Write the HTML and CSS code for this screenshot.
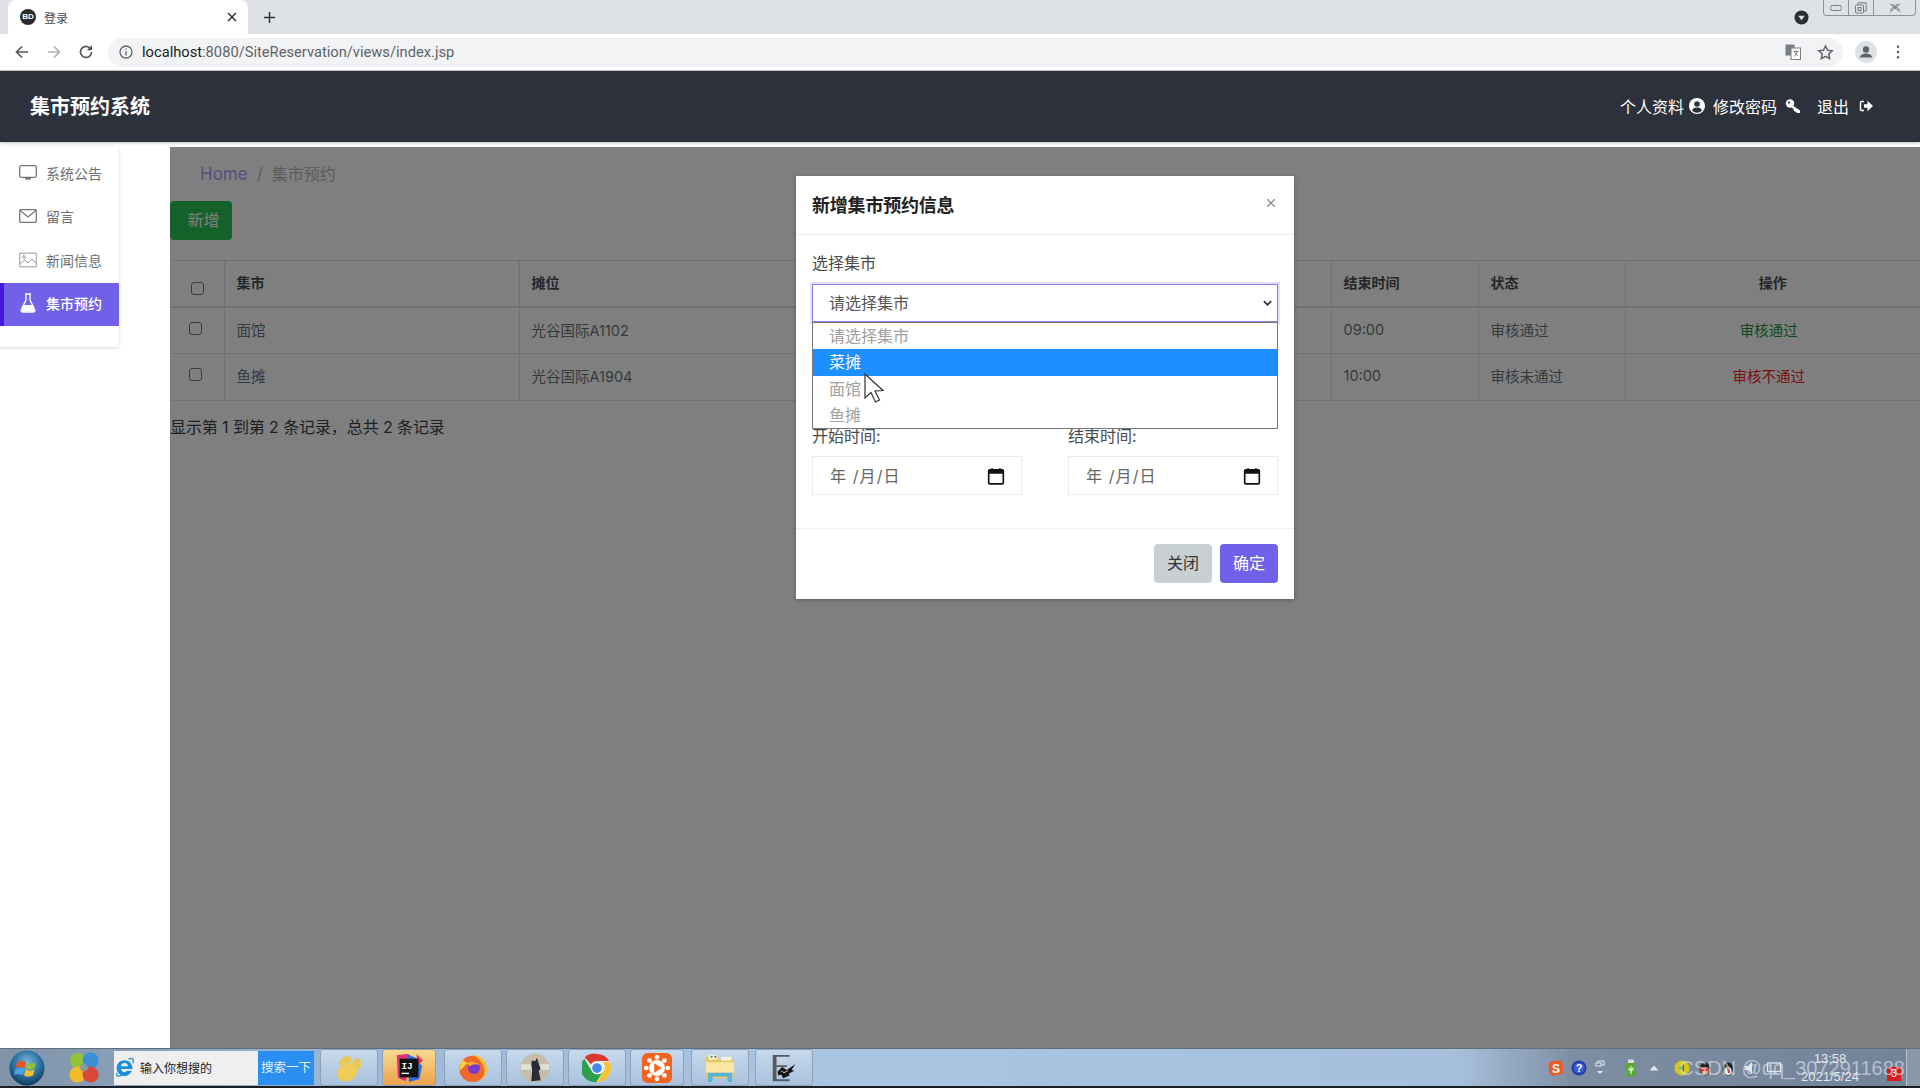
FILE: index.html
```html
<!DOCTYPE html>
<html lang="zh-CN">
<head>
<meta charset="utf-8">
<title>登录</title>
<link rel="stylesheet" href="styles.css">
</head>
<body>
<div class="tabstrip">
  <div class="tab">
    <span class="favicon">BD</span>
    <span class="tab-title">登录</span>
    <svg class="tab-close" viewBox="0 0 10 10"><path d="M1 1l8 8M9 1l-8 8"/></svg>
  </div>
  <svg class="tab-new" viewBox="0 0 14 14"><path d="M7 1v12M1 7h12"/></svg>
  <svg class="profile-drop" viewBox="0 0 16 16"><circle cx="8" cy="8" r="7.5" fill="#2b2d30"/><path d="M4.5 6h7L8 11z" fill="#dee1e6"/></svg>
  <div class="winbtns">
    <span class="winbtn win-min"><svg viewBox="0 0 12 6"><rect x="0.5" y="0.5" width="11" height="5" rx="2"/></svg></span>
    <span class="winbtn win-max"><svg viewBox="0 0 12 12"><rect x="0.5" y="3" width="8" height="8" rx="1"/><path d="M3 3V0.8h8.2V9H8.5"/><rect x="3" y="5.5" width="3" height="3"/></svg></span>
    <span class="winbtn win-close"><svg viewBox="0 0 14 10"><path d="M2 1l10 8M12 1L2 9M4 1l8 6M10 1L2 7"/></svg></span>
  </div>
</div>
<div class="toolbar">
  <svg class="nav-ico" viewBox="0 0 16 16"><path d="M14 8H3M8 2.5L2.5 8 8 13.5"/></svg>
  <svg class="nav-ico nav-off" viewBox="0 0 16 16"><path d="M2 8h11M8 2.5L13.5 8 8 13.5"/></svg>
  <svg class="nav-ico" viewBox="0 0 16 16"><path d="M13.5 8A5.5 5.5 0 1 1 11.6 3.8"/><path class="solid" d="M14 1v5.2H8.8z"/></svg>
  <div class="omnibox">
    <svg class="info-ico" viewBox="0 0 14 14"><circle cx="7" cy="7" r="6"/><path d="M7 6.2V10.5M7 3.4v1.4"/></svg>
    <span class="url"><span class="url-host">localhost</span>:8080/SiteReservation/views/index.jsp</span>
    <svg class="translate-ico" viewBox="0 0 16 16"><rect x="0.5" y="0.5" width="9" height="11" fill="#7b7f84"/><rect x="6" y="4" width="9.5" height="11.5" fill="#fff" stroke="#7b7f84"/><path d="M8.5 7.5h5M11 6.5v1M9.5 12.5l3-5M9.5 8.5l3.5 3.5" fill="none" stroke="#7b7f84"/></svg>
    <svg class="star-ico" viewBox="0 0 16 16"><path d="M8 1.8l1.9 4.1 4.4.5-3.3 3 .9 4.4L8 11.6l-3.9 2.2.9-4.4-3.3-3 4.4-.5z"/></svg>
  </div>
  <svg class="avatar-ico" viewBox="0 0 22 22"><circle cx="11" cy="11" r="11" fill="#dee1e6"/><circle cx="11" cy="8.5" r="3.2" fill="#5f6368"/><path d="M4.8 16.5c.6-3 3.4-4 6.2-4s5.6 1 6.2 4z" fill="#5f6368"/></svg>
  <svg class="dots-ico" viewBox="0 0 4 16"><circle cx="2" cy="2" r="1.5"/><circle cx="2" cy="8" r="1.5"/><circle cx="2" cy="14" r="1.5"/></svg>
</div>

<header class="appbar">
  <h1 class="brand">集市预约系统</h1>
  <nav class="usernav">
    <span class="usernav-item">个人资料
      <svg class="usernav-ico" viewBox="0 0 16 16"><circle cx="8" cy="8" r="8" fill="#fff"/><circle cx="8" cy="6" r="2.8" fill="#2d313c"/><path d="M3 12.500c1-2.500 3-3 5-3s4 .5 5 3a6.500 6.500 0 0 1-10 0z" fill="#2d313c"/></svg>
    </span>
    <span class="usernav-item">修改密码
      <svg class="usernav-ico key-ico" viewBox="0 0 16 16"><circle cx="5" cy="5.500" r="4.200" fill="#fff"/><circle cx="4" cy="4.500" r="1.100" fill="#2d313c"/><path d="M7 7l8 5.500v2.500h-3L10.500 13.500 9 13.300l-.2-1.500L6 8.500z" fill="#fff"/></svg>
    </span>
    <span class="usernav-item usernav-exit">退出
      <svg class="usernav-ico" viewBox="0 0 16 16"><path d="M6 3.500H3.500A1 1 0 0 0 2.500 4.500v7a1 1 0 0 0 1 1H6" fill="none" stroke="#fff" stroke-width="1.500"/><path d="M6 6.200h3.500V2.800L15 8l-5.500 5.200V9.800H6z" fill="#fff"/></svg>
    </span>
  </nav>
</header>

<div class="workspace">
  <aside class="sidecol">
    <ul class="sidemenu">
      <li class="sideitem">
        <svg class="side-ico" viewBox="0 0 18 16"><rect x="0.7" y="0.7" width="16.6" height="11.6" rx="1.5"/><path class="solid" d="M6 12.500h6v2H6z"/></svg>
        系统公告
      </li>
      <li class="sideitem">
        <svg class="side-ico" viewBox="0 0 18 16"><rect x="0.7" y="1.7" width="16.6" height="12.6" rx="0.8"/><path d="M1 2.500l8 6.500 8-6.500"/></svg>
        留言
      </li>
      <li class="sideitem">
        <svg class="side-ico side-ico-light" viewBox="0 0 18 16"><rect x="0.7" y="1.2" width="16.6" height="13.6"/><circle cx="5" cy="5" r="1.3"/><path d="M1 12l4.500-4 3.500 3 4-4 4.500 4.500"/></svg>
        新闻信息
      </li>
      <li class="sideitem is-active">
        <svg class="side-ico" viewBox="0 0 18 20"><path d="M6 1h6M7 1v6L2.200 16.800A1.500 1.500 0 0 0 3.500 19h11a1.500 1.500 0 0 0 1.300-2.200L11 7V1"/><path class="solid" d="M4.800 12h8.400l2.300 5.400a.8.8 0 0 1-.8 1H3.300a.8.8 0 0 1-.8-1z"/></svg>
        集市预约
      </li>
    </ul>
  </aside>

  <main class="content">
    <div class="breadcrumb">
      <span class="crumb-link">Home</span>
      <span class="crumb-sep">/</span>
      <span class="crumb-current">集市预约</span>
    </div>
    <button class="btn-add" type="button">新增</button>
    <table class="grid">
      <colgroup>
        <col class="c-check"><col class="c-wide"><col class="c-wide"><col class="c-mid"><col class="c-mid"><col class="c-narrow"><col class="c-narrow"><col>
      </colgroup>
      <thead>
        <tr>
          <th><span class="checkbox head-check"></span></th>
          <th>集市</th><th>摊位</th><th></th><th></th><th>结束时间</th><th>状态</th><th class="center">操作</th>
        </tr>
      </thead>
      <tbody>
        <tr>
          <td><span class="checkbox"></span></td>
          <td>面馆</td><td>光谷国际A1102</td><td></td><td></td><td>09:00</td><td>审核通过</td><td class="center pass">审核通过</td>
        </tr>
        <tr>
          <td><span class="checkbox"></span></td>
          <td>鱼摊</td><td>光谷国际A1904</td><td></td><td></td><td>10:00</td><td>审核未通过</td><td class="center fail">审核不通过</td>
        </tr>
      </tbody>
    </table>
    <p class="pageinfo">显示第 1 到第 2 条记录，总共 2 条记录</p>

    <div class="backdrop"></div>
    <section class="modal">
      <div class="modal-head">
        <h2 class="modal-title">新增集市预约信息</h2>
        <svg class="modal-close" viewBox="0 0 12 12"><path d="M1.500 1.500l9 9M10.500 1.500l-9 9"/></svg>
      </div>
      <div class="modal-body">
        <div class="field-label">选择集市</div>
        <div class="selectbox">
          <span class="select-value">请选择集市</span>
          <svg class="select-arrow" viewBox="0 0 10 6"><path d="M1 1l4 4 4-4"/></svg>
          <ul class="options">
            <li class="option">请选择集市</li>
            <li class="option is-hover">菜摊</li>
            <li class="option">面馆</li>
            <li class="option">鱼摊</li>
          </ul>
        </div>
        <div class="date-row">
          <div class="date-field">
            <div class="field-label">开始时间:</div>
            <div class="dateinput"><span class="date-value">年 /月/日</span>
              <svg class="cal-ico" viewBox="0 0 16 16"><rect x="1.500" y="2.500" width="13" height="12.500" rx="1" fill="none" stroke="#111" stroke-width="1.500"/><rect x="1.500" y="2.500" width="13" height="3.500" fill="#111"/><path d="M4.500 1v2M11.500 1v2" stroke="#111" stroke-width="1.500"/></svg>
            </div>
          </div>
          <div class="date-field">
            <div class="field-label">结束时间:</div>
            <div class="dateinput"><span class="date-value">年 /月/日</span>
              <svg class="cal-ico" viewBox="0 0 16 16"><rect x="1.500" y="2.500" width="13" height="12.500" rx="1" fill="none" stroke="#111" stroke-width="1.500"/><rect x="1.500" y="2.500" width="13" height="3.500" fill="#111"/><path d="M4.500 1v2M11.500 1v2" stroke="#111" stroke-width="1.500"/></svg>
            </div>
          </div>
        </div>
      </div>
      <div class="modal-foot">
        <button class="btn btn-close" type="button">关闭</button>
        <button class="btn btn-ok" type="button">确定</button>
      </div>
    </section>
  </main>
  <svg class="cursor" viewBox="0 0 20 30"><path d="M1 1v24l6-5.500 4.500 9.500 4-2-4.500-9 8-.5z" fill="#fff" stroke="#333" stroke-width="1.200"/></svg>
</div>

<footer class="taskbar">
  <svg class="orb" viewBox="0 0 36 36">
    <defs><radialGradient id="orbg" cx="50%" cy="35%" r="65%"><stop offset="0" stop-color="#7fb6dc"/><stop offset="0.6" stop-color="#2a6f9e"/><stop offset="1" stop-color="#0f3a5c"/></radialGradient></defs>
    <circle cx="18" cy="18" r="17.500" fill="url(#orbg)"/>
    <path d="M8 12c3-1.500 6-1.500 9 0l-1.500 6c-3-1.500-6-1.500-9 0z" fill="#e2562a"/>
    <path d="M18 12.500c3 1.500 6 1.500 9 0l-1.500 6c-3 1.500-6 1.500-9 0z" fill="#8bc13f"/>
    <path d="M6.500 19c3-1.500 6-1.500 9 0L14 25c-3-1.500-6-1.500-9 0z" fill="#4aa3e0"/>
    <path d="M16.500 19.500c3 1.500 6 1.500 9 0L24 25.500c-3 1.500-6 1.500-9 0z" fill="#f4c030"/>
  </svg>
  <svg class="balls" viewBox="0 0 34 36">
    <circle cx="10" cy="10" r="8" fill="#8fc43a"/>
    <circle cx="24" cy="10" r="8.500" fill="#3b8fd8"/>
    <circle cx="10" cy="25" r="8.500" fill="#f2bb2a"/>
    <circle cx="24" cy="25" r="8.500" fill="#d8493c"/>
    <circle cx="17" cy="17.500" r="4" fill="#8c96a4"/>
  </svg>
  <div class="searchbox">
    <svg class="ie-ico" viewBox="0 0 20 20"><path d="M10 3a7.500 7.500 0 1 0 7 10h-4.500a3.200 3.200 0 0 1-5.800-1.500H17.500C18 7 15 3 10 3zM6.800 8.800a3.200 3.200 0 0 1 6.400 0z" fill="#1b8fdc" fill-rule="evenodd"/><path d="M3 15C1 19 5 19 9 16.500M14 2c3-1.500 5.500-.5 4 4" fill="none" stroke="#1b8fdc" stroke-width="1.200"/></svg>
    <span class="search-text">输入你想搜的</span>
    <span class="search-go">搜索一下</span>
  </div>
  <div class="tasks">
    <div class="task">
      <svg class="task-ico" viewBox="0 0 32 32"><ellipse cx="12" cy="9" rx="7.500" ry="5" transform="rotate(-30 12 9)" fill="#e8c85c"/><ellipse cx="24" cy="12" rx="5" ry="6.500" transform="rotate(25 24 12)" fill="#e8c85c"/><ellipse cx="14" cy="21" rx="11" ry="9" transform="rotate(-25 14 21)" fill="#efcb58"/></svg>
    </div>
    <div class="task task-hot task-short">
      <svg class="task-ico" viewBox="0 0 32 32"><path d="M3 2l12-1 6 8-9 21-8-4z" fill="#e5307a"/><path d="M14 1l9 4 7 9-3 14-11 3z" fill="#2e6fe0"/><path d="M24 1l7 7-6 5z" fill="#e5307a"/><rect x="6" y="6" width="20" height="20" fill="#111"/><text x="8" y="17" class="ij-text">IJ</text><rect x="8" y="21" width="8" height="1.500" fill="#fff"/></svg>
    </div>
    <div class="task">
      <svg class="task-ico" viewBox="0 0 32 32"><circle cx="15.500" cy="17" r="14" fill="#f2672c"/><path d="M16 2c8 0 15 7 15 15 0 6-4 12-10 14 5-3 8-8 7-14-1-5-5-11-12-15z" fill="#fbbb2e"/><path d="M4 7c0 4-3 8-2 12l8-8z" fill="#ffcf3a"/><circle cx="17" cy="16" r="6.500" fill="#7a3cc8"/><path d="M9 11c4-3 11-2 14 2-4-2-8-1-10 1z" fill="#ffa62c"/></svg>
    </div>
    <div class="task">
      <svg class="task-ico" viewBox="0 0 32 32"><circle cx="16" cy="16" r="15.500" fill="#c3bdaa"/><path d="M1 12h30v6H1z" fill="#e0dfd6"/><path d="M13 6c3-2 6-1 6 2l3 9-2 2 2 10-10 1 1-11-1-7z" fill="#2c2a38"/><circle cx="15" cy="6" r="2.500" fill="#d8b9a0"/></svg>
    </div>
    <div class="task">
      <svg class="task-ico" viewBox="0 0 32 32"><circle cx="16" cy="16" r="15" fill="#e8eaed"/><path d="M16 1a15 15 0 0 1 13 7.500H16a7.500 7.500 0 0 0-6.500 3.700L3 4.500A15 15 0 0 1 16 1z" fill="#d93a30"/><path d="M29.500 9.500A15 15 0 0 1 16.500 31L22.500 20a7.500 7.500 0 0 0 0-10.500z" fill="#f4c430"/><path d="M2.500 6A15 15 0 0 0 15.500 31L21.500 21a7.500 7.500 0 0 1-11.500-2.500z" fill="#2f9e4f"/><circle cx="16" cy="16" r="6.500" fill="#fff"/><circle cx="16" cy="16" r="5.200" fill="#4688f1"/></svg>
    </div>
    <div class="task task-short">
      <svg class="task-ico" viewBox="0 0 32 32"><rect width="32" height="32" rx="6" fill="#f2641f"/><circle cx="16" cy="16" r="8.500" fill="#fff"/><g fill="#fff"><circle cx="16" cy="4.500" r="2.500"/><circle cx="24" cy="8" r="2.500"/><circle cx="27.500" cy="16" r="2.500"/><circle cx="24" cy="24" r="2.500"/><circle cx="16" cy="27.500" r="2.500"/><circle cx="8" cy="24" r="2.500"/><circle cx="4.500" cy="16" r="2.500"/><circle cx="8" cy="8" r="2.500"/></g><path d="M13 11l8 5-8 5z" fill="#f2641f"/></svg>
    </div>
    <div class="task">
      <svg class="task-ico" viewBox="0 0 32 32"><path d="M1 4h12l2 3h16v20H1z" fill="#e8c768"/><rect x="4" y="2" width="9" height="5" fill="#f4f1e0"/><rect x="17" y="4" width="11" height="4" fill="#f4f1e0"/><circle cx="7" cy="4" r="1.200" fill="#3d9e3f"/><circle cx="11" cy="4" r="1.200" fill="#d8493c"/><rect x="1" y="10" width="30" height="11" fill="#fce8a4"/><path d="M3 31V21h26v10h-5v-6H8v6z" fill="#5ab3dc"/></svg>
    </div>
    <div class="task task-last">
      <svg class="task-ico" viewBox="0 0 32 32"><path d="M4 2h18v2H8v9h11v2H8v13h14v2H4z" fill="#57595c"/><path d="M9 20l5-5 5 3 9-6-4 6 3 1-6 3 1 2-7 3-2-4-3 1z" fill="#141414"/><path d="M13 19l3 2 4-2" fill="none" stroke="#d8dce0"/></svg>
    </div>
  </div>
  <div class="tray">
    <svg class="tray-ico" viewBox="0 0 16 16"><rect x="1" y="1" width="14" height="14" rx="3.500" fill="#ee5c24" transform="rotate(-8 8 8)"/><text x="8" y="12.500" class="tray-glyph">S</text></svg>
    <svg class="tray-ico" viewBox="0 0 16 16"><circle cx="8" cy="8" r="7.500" fill="#2438a0"/><circle cx="8" cy="8" r="5.800" fill="#3a5bd0"/><text x="8" y="12" class="tray-glyph tray-glyph-small">?</text></svg>
    <svg class="tray-mini" viewBox="0 0 10 16"><rect x="3" y="1" width="6" height="4" fill="none" stroke="#e4e8ee"/><rect x="1" y="3" width="5" height="3" fill="#71839a" stroke="#e4e8ee"/><path d="M2 11h6l-3 3z" fill="#e4e8ee"/></svg>
    <svg class="tray-usb" viewBox="0 0 12 18"><rect x="3" y="0.500" width="6" height="4" fill="#d8dcdf"/><rect x="1" y="4" width="10" height="13.500" rx="1" fill="#58a83a"/><path d="M6 7v8M4 9v2h2M8 8.500V11H6" fill="none" stroke="#fff"/></svg>
    <svg class="tray-up" viewBox="0 0 10 6"><path d="M5 0.500l4.500 5h-9z" fill="#e4e8ee"/></svg>
    <svg class="tray-ico tray-gap" viewBox="0 0 16 16"><circle cx="8" cy="8" r="7.500" fill="#d2c81e"/><path d="M5 8l5-4v8z" fill="#2f8b3c"/></svg>
    <svg class="tray-ico" viewBox="0 0 16 16"><ellipse cx="8" cy="9" rx="5.500" ry="6.500" fill="#222"/><ellipse cx="8" cy="11" rx="3.500" ry="4" fill="#e8a070"/><path d="M3 8l10 1v2H3z" fill="#d83030"/></svg>
    <svg class="tray-ico" viewBox="0 0 16 16"><ellipse cx="8" cy="9" rx="5.500" ry="6.500" fill="#222"/><ellipse cx="8" cy="11" rx="3.500" ry="4" fill="#eee"/><path d="M7 8h3v5H8z" fill="#d83030"/></svg>
    <svg class="tray-ico" viewBox="0 0 16 16"><path d="M2 6h3l4-4v12l-4-4H2z" fill="#e4e8ee"/></svg>
    <svg class="tray-ico" viewBox="0 0 16 16"><rect x="1.500" y="3" width="13" height="8.500" fill="none" stroke="#e4e8ee" stroke-width="1.300"/><path d="M5 14h6M8 11.500V14" stroke="#e4e8ee"/></svg>
    <div class="clock"><span>13:58</span><span>2021/5/24</span></div>
    <span class="tray-red">3</span>
    <span class="watermark">CSDN @qq_3072911688</span>
    <span class="show-desktop"></span>
  </div>
</footer>
</body>
</html>
```

FILE: styles.css
```css
* { box-sizing: border-box; }
html, body { margin: 0; height: 100%; }
body {
  display: flex;
  flex-direction: column;
  height: 1088px;
  overflow: hidden;
  background: #fff;
  font-family: "Inter", "Noto Sans CJK SC", sans-serif;
  font-size: 16px;
  color: #212529;
}
ul { list-style: none; margin: 0; padding: 0; }
h1, h2, p { margin: 0; }
svg { display: block; flex: none; }

/* browser chrome */
.tabstrip {
  height: 34px;
  flex: none;
  background: #dee1e6;
  display: flex;
  align-items: flex-end;
  padding-left: 8px;
}
.tab {
  width: 240px;
  height: 34px;
  background: #fff;
  border-radius: 8px 8px 0 0;
  display: flex;
  align-items: center;
  padding: 0 10px 0 12px;
  font-size: 12px;
  color: #45494e;
}
.favicon {
  width: 16px;
  height: 16px;
  border-radius: 50%;
  background: #2b2b2e;
  color: #fff;
  font: 700 8px/16px "Liberation Sans", sans-serif;
  text-align: center;
}
.tab-title { margin-left: 8px; flex: 1; }
.tab-close { width: 10px; height: 10px; margin-right: 1px; fill: none; stroke: #333; stroke-width: 1.5; }
.tab-new { width: 13px; height: 13px; margin: 0 0 10px 15px; fill: none; stroke: #333; stroke-width: 1.6; }
.profile-drop { width: 15px; height: 15px; margin: 0 0 9px auto; }
.winbtns {
  align-self: flex-start;
  display: flex;
  margin: 0 4px 0 14px;
  width: 93px;
  height: 16px;
  border: 1px solid #8e9398;
  border-top: 0;
  border-radius: 0 0 4px 4px;
}
.winbtn { display: flex; align-items: center; justify-content: center; border-right: 1px solid #8e9398; }
.winbtn:last-child { border-right: 0; }
.winbtn svg { fill: none; stroke: #777c82; }
.win-min { width: 25px; }
.win-min svg { width: 12px; height: 6px; }
.win-max { width: 25px; }
.win-max svg { width: 12px; height: 12px; }
.win-close { flex: 1; }
.win-close svg { width: 14px; height: 10px; }

.toolbar {
  height: 37px;
  flex: none;
  background: #fff;
  display: flex;
  align-items: center;
  padding: 0 0 0 14px;
  border-bottom: 1px solid #c8cacd;
}
.nav-ico { width: 16px; height: 16px; margin-right: 16px; fill: none; stroke: #54585d; stroke-width: 1.7; }
.nav-ico .solid { fill: #54585d; stroke: none; }
.nav-off { stroke: #b0b3b7; }
.omnibox {
  width: 1735px;
  height: 29px;
  margin-left: -2px;
  background: #f1f3f4;
  border-radius: 15px;
  display: flex;
  align-items: center;
  padding: 0 9px 0 11px;
}
.info-ico { width: 14px; height: 14px; fill: none; stroke: #5f6368; stroke-width: 1.3; }
.url { margin-left: 9px; flex: 1; font-size: 14.7px; color: #5f6368; font-family: "Roboto", sans-serif; }
.url-host { color: #202124; }
.translate-ico { width: 16px; height: 16px; margin-right: 16px; }
.star-ico { width: 17px; height: 17px; fill: none; stroke: #5f6368; stroke-width: 1.4; }
.avatar-ico { width: 22px; height: 22px; margin-left: 12px; }
.dots-ico { width: 4px; height: 14px; margin-left: 19px; fill: #5f6368; }

/* app header */
.appbar {
  height: 71px;
  flex: none;
  background: #2d313c;
  display: flex;
  align-items: center;
  justify-content: space-between;
  padding: 0 46px 2px 30px;
  box-shadow: 0 1px 3px rgba(0,0,0,.25);
  position: relative;
  z-index: 2;
}
.brand { font-size: 20px; font-weight: 700; color: #fff; line-height: 1; margin-top: 2px; }
.usernav { display: flex; gap: 8px; }
.usernav-item { display: flex; align-items: center; gap: 5px; color: #fff; font-size: 16px; white-space: nowrap; }
.usernav-ico { width: 16px; height: 16px; }
.key-ico { margin: 0 8px 0 3px; }
.usernav-exit { gap: 9px; }

/* workspace */
.workspace { flex: 1; display: flex; min-height: 0; padding-top: 5px; position: relative; }
.sidecol { width: 170px; flex: none; }
.sidemenu {
  width: 119px;
  height: 200px;
  background: #fff;
  box-shadow: 0 1px 3px rgba(0,0,0,.15);
  padding-top: 5px;
}
.sideitem {
  height: 43.5px;
  display: flex;
  align-items: center;
  gap: 9px;
  padding: 0 0 2px 19px;
  font-size: 14px;
  color: #6c6f73;
}
.side-ico { width: 18px; height: 16px; fill: none; stroke: #777; stroke-width: 1.3; }
.side-ico .solid { fill: currentColor; stroke: none; }
.side-ico-light { stroke: #9a9a9a; stroke-width: 1; }
.sideitem.is-active {
  background: #7161e8;
  border-left: 4px solid #4617e0;
  padding-left: 15px;
  color: #fff;
  font-weight: 500;
}
.sideitem.is-active .side-ico { height: 20px; stroke: #fff; }

.content { flex: 1; position: relative; min-width: 0; }
.breadcrumb { display: flex; align-items: flex-start; gap: 9px; padding: 15px 0 0 30px; height: 54px; font-size: 16px; line-height: 24px; }
.crumb-link { color: #a8a0f8; font-size: 17px; }
.crumb-sep { color: #b8b8b8; font-size: 17px; }
.crumb-current { color: #b8b8b8; }
.btn-add {
  display: block;
  width: 62px;
  height: 39px;
  border: 0;
  border-radius: 4px;
  background: #28c454;
  color: #fff;
  padding: 0 0 3px 5px;
  font: 16px "Inter", "Noto Sans CJK SC", sans-serif;
}
.grid {
  width: 100%;
  margin-top: 20px;
  border-collapse: collapse;
  table-layout: fixed;
  font-size: 14px;
  color: #6c757d;
  border-top: 1px solid #dee2e6;
}
.c-check { width: 54px; }
.c-wide { width: 295px; }
.c-mid { width: 258.5px; }
.c-narrow { width: 147px; }
.grid th, .grid td { height: 46.5px; padding: 0 12px; text-align: left; border-bottom: 1px solid #dee2e6; border-right: 1px solid #dee2e6; vertical-align: middle; }
.grid td { padding-bottom: 3px; font-size: 14.5px; }
.grid th:last-child, .grid td:last-child { border-right: 0; }
.grid th { font-weight: 700; color: #495057; border-bottom-width: 2px; padding-bottom: 4px; }
.grid .center { text-align: center; }
.grid td.center { padding-right: 20px; }
.grid .pass { color: #1f9034; }
.grid .fail { color: #f01c1c; }
.checkbox { display: block; width: 13px; height: 13px; margin: -2px 0 0 7px; border: 1px solid #767676; border-radius: 3px; background: #fff; }
.head-check { margin: 14px 0 0 9px; }
.pageinfo { margin-top: 14px; font-size: 16px; line-height: 24px; color: #3a3f44; letter-spacing: -.1px; }
.backdrop { position: absolute; inset: 0; background: rgba(0,0,0,.5); }

/* modal */
.modal {
  position: absolute;
  left: 626px;
  top: 29px;
  width: 498px;
  height: 423px;
  background: #fff;
  box-shadow: 0 1px 4px rgba(0,0,0,.3);
  display: flex;
  flex-direction: column;
}
.modal-head {
  height: 59px;
  flex: none;
  display: flex;
  align-items: center;
  justify-content: space-between;
  padding: 0 18px 0 16px;
  border-bottom: 1px solid #ececec;
}
.modal-title { font-size: 18px; font-weight: 700; line-height: 1; color: #222; margin-top: 1px; letter-spacing: -.2px; }
.modal-close { width: 10px; height: 10px; fill: none; stroke: #888; stroke-width: 1.5; margin-top: -4px; }
.modal-body { flex: 1; padding: 16px 16px 0; }
.field-label { font-size: 16px; line-height: 24px; color: #4a4a4a; }
.selectbox {
  position: relative;
  height: 38px;
  margin-top: 9px;
  border: 1px solid #8a7ee0;
  box-shadow: 0 0 0 2px #e3dffa;
  display: flex;
  align-items: center;
  justify-content: space-between;
  padding: 0 5px 0 16px;
  color: #555;
}
.select-value { position: relative; top: -1px; }
.select-arrow { width: 9px; height: 6px; fill: none; stroke: #333; stroke-width: 2; }
.options {
  position: absolute;
  left: -1px;
  right: -1px;
  top: 37px;
  height: 107px;
  background: #fff;
  border: 1px solid #767676;
  z-index: 1;
}
.option { height: 26.25px; line-height: 26.5px; padding-left: 16px; color: #a0a0a0; }
.option.is-hover { background: #1e8fff; color: #fff; }
.date-row { display: flex; gap: 46px; margin-top: 103px; }
.date-field { width: 210px; }
.date-field .field-label { line-height: 22px; }
.dateinput {
  height: 39px;
  margin-top: 9px;
  border: 1px solid #ebebeb;
  display: flex;
  align-items: center;
  justify-content: space-between;
  padding: 0 16px 0 17px;
  color: #666;
  white-space: nowrap;
}
.date-value { position: relative; top: -1px; letter-spacing: 1.1px; }
.cal-ico { width: 18px; height: 18px; }
.modal-foot {
  height: 71px;
  flex: none;
  border-top: 1px solid #f0f0f0;
  display: flex;
  justify-content: flex-end;
  gap: 8px;
  padding: 15px 16px 0;
}
.btn { width: 58px; height: 39px; border: 0; border-radius: 4px; padding: 0 0 3px; font: 16px "Inter", "Noto Sans CJK SC", sans-serif; }
.btn-close { background: #c9d0d4; color: #333; }
.btn-ok { background: #7161e8; color: #fff; }
.cursor { position: absolute; left: 864px; top: 231px; width: 20px; height: 30px; z-index: 3; }

/* taskbar */
.taskbar {
  height: 40px;
  flex: none;
  position: relative;
  display: flex;
  align-items: center;
  background: linear-gradient(90deg, #7f92a8 0, #9db8d6 18%, #a9c5e2 45%, #a6c0dc 76%, #7d8ea3 82%, #72839a 100%);
  border-top: 1px solid #5e6c7c;
  border-bottom: 2px solid #1a1f26;
}
.orb { width: 36px; height: 36px; margin-left: 9px; }
.balls { width: 32px; height: 34px; margin-left: 23px; }
.searchbox {
  width: 200px;
  height: 34px;
  margin-left: 14px;
  background: #efefef;
  display: flex;
  align-items: center;
  font-size: 12px;
  color: #222;
  padding-left: 0;
}
.ie-ico { width: 21px; height: 21px; }
.search-text { margin-left: 5px; flex: 1; }
.search-go { width: 56px; height: 34px; line-height: 34px; background: #2a8ff0; color: #e8f2ff; text-align: center; font-size: 12.5px; }
.tasks { display: flex; gap: 4px; margin-left: 6px; }
.task {
  width: 58px;
  height: 37px;
  display: flex;
  align-items: center;
  justify-content: center;
  border-radius: 3px;
  border: 1px solid #8da1b8;
  background: linear-gradient(180deg, #c6d8ec, #a9c2dd);
}
.task-short { width: 54px; margin-right: 3.5px; }
.task-last { margin-left: 2px; }
.task-hot { background: linear-gradient(180deg, #f8d98c, #eda24f); }
.task-ico { width: 30px; height: 30px; }
.ij-text { font: 700 10px "Liberation Mono", monospace; fill: #fff; }
.tray { margin-left: auto; display: flex; align-items: center; gap: 7px; height: 100%; padding-right: 14px; position: relative; }
.tray-ico { width: 16px; height: 16px; }
.tray-glyph { font: 700 12px "Liberation Sans", sans-serif; fill: #fff; text-anchor: middle; }
.tray-glyph-small { font-size: 11px; }
.tray-mini { width: 10px; height: 16px; margin-left: 1px; }
.tray-usb { width: 12px; height: 18px; margin-left: 13px; }
.tray-up { width: 10px; height: 6px; margin-left: 5px; }
.tray-gap { margin-left: 8px; }
.clock { display: flex; flex-direction: column; align-items: center; width: 72px; margin-left: 5px; font: 13px/18px "Liberation Sans", sans-serif; color: #e4e8ee; }
.tray-red { width: 14px; height: 14px; margin: 12px 5px 0 14px; background: #d81c1c; color: #fff; font: 10px/14px "Liberation Sans", sans-serif; text-align: center; }
.watermark {
  position: absolute;
  right: 15px;
  top: 6px;
  font: 20px/26px "Liberation Sans", sans-serif;
  color: rgba(225, 230, 238, .62);
  white-space: nowrap;
}
.show-desktop { position: absolute; right: 0; top: 0; bottom: 0; width: 14px; background: #8a98a8; border-left: 1px solid #b8c2cc; }
```
